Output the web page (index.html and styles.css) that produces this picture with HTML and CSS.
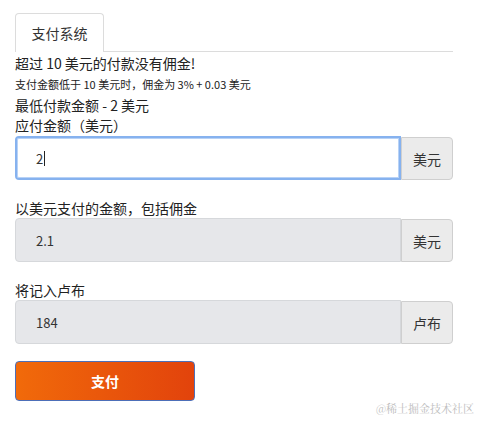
FILE: index.html
```html
<!DOCTYPE html>
<html lang="zh">
<head>
<meta charset="utf-8">
<link rel="stylesheet" href="styles.css">
</head>
<body>
<div class="page">
  <div class="tabs">
    <div class="tab">支付系统</div>
    <div class="tab-rest"></div>
  </div>
  <div class="info">
    <p class="line">超过 10 美元的付款没有佣金!</p>
    <p class="line small">支付金额低于 10 美元时，佣金为 3% + 0.03 美元</p>
    <p class="line">最低付款金额 - 2 美元</p>
    <p class="line">应付金额（美元）</p>
  </div>
  <div class="group first">
    <div class="field focus"><span class="value">2</span><span class="caret"></span></div>
    <div class="addon">美元</div>
  </div>
  <label class="label">以美元支付的金额，包括佣金</label>
  <div class="group">
    <div class="field disabled"><span class="value">2.1</span></div>
    <div class="addon">美元</div>
  </div>
  <label class="label">将记入卢布</label>
  <div class="group">
    <div class="field disabled"><span class="value">184</span></div>
    <div class="addon">卢布</div>
  </div>
  <button class="pay">支付</button>
</div>
<div class="watermark">@稀土掘金技术社区</div>
</body>
</html>
```
FILE: styles.css
```css
html, body {
  margin: 0;
  padding: 0;
  background: #fff;
}
body {
  font-family: "Noto Sans CJK SC", "Noto Sans", sans-serif;
  color: #222;
  width: 479px;
  height: 426px;
  position: relative;
  overflow: hidden;
}
.page {
  width: 438px;
  padding: 13px 0 0 15px;
  display: flex;
  flex-direction: column;
}
.tabs {
  display: flex;
  height: 39px;
}
.tab {
  width: 87px;
  height: 38px;
  border: 1px solid #dcdcdc;
  border-bottom: none;
  border-radius: 4px 4px 0 0;
  display: flex;
  align-items: center;
  justify-content: center;
  font-size: 14px;
  color: #333;
}
.tab-rest {
  flex: 1;
  border-bottom: 1px solid #dcdcdc;
}
.info {
  display: flex;
  flex-direction: column;
  margin-top: 1px;
}
.line {
  margin: 0;
  font-size: 14px;
  line-height: 20px;
  height: 20px;
}
.line.small {
  font-size: 11px;
  height: 22px;
  line-height: 22px;
}
.group {
  display: flex;
  height: 44px;
  margin-bottom: 19px;
}
.group.first {
  margin-top: 1px;
}
.field {
  flex: 1;
  box-sizing: border-box;
  border: 1px solid #d6d8db;
  border-radius: 4px 0 0 4px;
  display: flex;
  align-items: center;
  padding-left: 20px;
  font-size: 13px;
  color: #333;
}
.field.disabled {
  background: #e6e7ea;
}
.field.focus {
  border: 2px solid #86b2ef;
  box-shadow: inset 0 0 0 1px #b8d2f6;
  padding-left: 19px;
  background: #fff;
}
.caret {
  width: 1px;
  height: 15px;
  background: #222;
  margin-left: 1px;
}
.addon {
  width: 52px;
  box-sizing: border-box;
  margin-top: 1px;
  height: 43px;
  border: 1px solid #cfcfcf;
  border-radius: 0 4px 4px 0;
  background: #ebebeb;
  display: flex;
  align-items: center;
  justify-content: center;
  font-size: 14px;
  color: #333;
}
.label {
  font-size: 14px;
  line-height: 18px;
  height: 18px;
  margin-bottom: 1px;
  color: #222;
}
.pay {
  width: 180px;
  height: 40px;
  margin-top: -2px;
  border: 1px solid #4d6fb8;
  border-radius: 4px;
  background: linear-gradient(90deg, #f16a0a 0%, #e2430c 100%);
  color: #fff;
  font-family: "Noto Sans CJK SC", sans-serif;
  font-size: 14px;
  font-weight: bold;
  padding: 0;
}
.watermark {
  position: absolute;
  right: 5px;
  bottom: 10px;
  font-family: "Noto Serif CJK SC", "Noto Sans CJK SC", serif;
  font-size: 11px;
  color: #bdbdbd;
}
```
